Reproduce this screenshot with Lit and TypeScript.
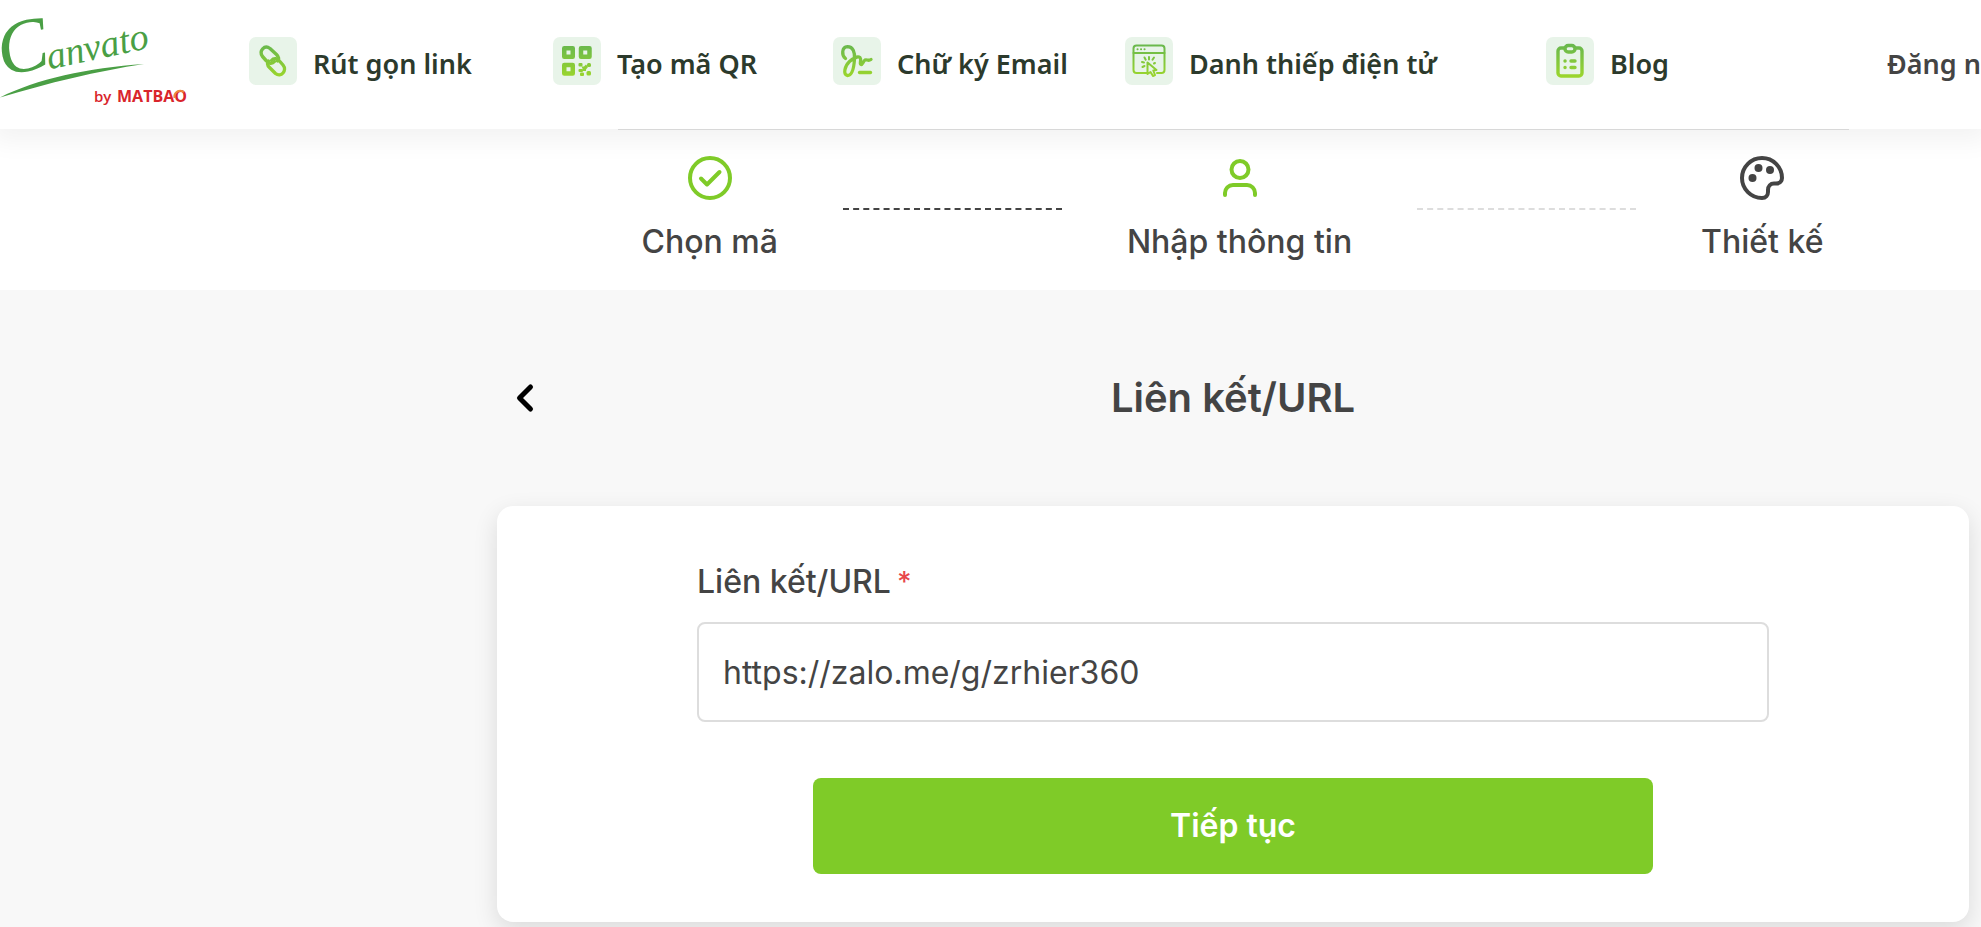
import { LitElement, html, css, svg } from "lit";
import { customElement, state } from "lit/decorators.js";

type NavItem = { label: string; icon: unknown };

const navIcon = (body: unknown) => svg`
  <svg viewBox="0 0 48 48" width="48" height="48" aria-hidden="true">
    <defs>
      <linearGradient id="g" gradientUnits="userSpaceOnUse" x1="0" y1="8" x2="0" y2="40">
        <stop offset="0" stop-color="#69b84d" />
        <stop offset="1" stop-color="#9bd62c" />
      </linearGradient>
    </defs>
    <rect width="48" height="48" rx="7" fill="#e8f4e9" />
    ${body}
  </svg>`;

const linkIcon = navIcon(svg`
  <g fill="none" stroke="url(#g)" stroke-width="3.400" stroke-linecap="round" stroke-linejoin="round">
    <path d="M25.500 24.500C23 27.500 19.500 26.500 17.500 24L13.500 19.500C9.500 14 15.500 7.500 21 11.500L27.500 17.500C29.500 19.500 30 22 28.500 24" />
    <path d="M22.500 23.500C25 20.500 28.500 21.500 30.500 24L34 28C38.500 33.500 32 41 26.500 36.500L20.500 30.500C18.500 28.500 18 26 19.500 24" />
  </g>`);

const qrIcon = navIcon(svg`
  <g fill="none" stroke="url(#g)" stroke-width="4.500" stroke-linejoin="round">
    <rect x="11.250" y="11.250" width="8.500" height="8.500" />
    <rect x="28" y="11.250" width="8.500" height="8.500" />
    <rect x="11.250" y="28" width="8.500" height="8.500" />
  </g>
  <g fill="url(#g)">
    <rect x="25.500" y="26" width="4" height="3.500" rx="1" />
    <rect x="34" y="26" width="4" height="4" rx="1.500" />
    <path d="M28.500 29.500H31L33 27.500L35 30L33 32.500V34H29.500V31.500Z" />
    <rect x="25.500" y="32" width="4.500" height="3" rx="1" />
    <rect x="27" y="35.500" width="4" height="3.500" rx="1" />
    <rect x="33.500" y="34" width="4.500" height="4.500" rx="1.500" />
  </g>`);

const signIcon = navIcon(svg`
  <g fill="none" stroke="url(#g)" stroke-width="3.300" stroke-linecap="round" stroke-linejoin="round">
    <path d="M12.500 21.500C8.500 18.500 8.500 10 14.500 9.700C20 9.700 22 15 21.500 22C21 30 19.500 38.500 14.500 38.500C9.500 38 12 28.500 16.500 24.500C20.500 21 25 19 27 20.500C29 23 26 27 28 27.500C29.500 28 30 24.500 32 23C34 22 35 24.500 38 22.500" />
    <path d="M26.500 35.500H37.500" />
  </g>`);

const cardIcon = navIcon(svg`
  <g fill="none" stroke="url(#g)" stroke-width="2" stroke-linecap="round" stroke-linejoin="round">
    <path d="M22 36H11.500A3 3 0 0 1 8.500 33V11.500A3 3 0 0 1 11.500 8.500H36.500A3 3 0 0 1 39.500 11.500V33A3 3 0 0 1 36.500 36H32" />
    <path d="M8.500 16H39.500M12.500 12.300h.1M16 12.300h.1M19.500 12.300h.1" />
    <path d="M24 20v2.500M19.500 20.500l1.200 2.200M29 20.500l-1.500 2.200M17 25l2 .5M17.500 30l2-1M29 26.500l1-.5" />
    <path d="M22.500 25.500V37L25.500 35L28 39L30 38L28.300 33.500L31.500 33Z" />
  </g>`);

const blogIcon = navIcon(svg`
  <g fill="none" stroke="url(#g)" stroke-width="3.400" stroke-linecap="round" stroke-linejoin="round">
    <path d="M18 11H15A3 3 0 0 0 12 14V36A3 3 0 0 0 15 39H33A3 3 0 0 0 36 36V14A3 3 0 0 0 33 11H30" />
    <rect x="19" y="8.500" width="10" height="6.500" rx="3.200" />
    <path d="M19 24h.1M25 24h4M19 30.500h.1M25 30.500h4" />
  </g>`);

const checkIcon = svg`
  <svg viewBox="0 0 44 44" width="44" height="44" fill="none" stroke="currentColor" stroke-width="4" stroke-linecap="round" stroke-linejoin="round" aria-hidden="true">
    <circle cx="22" cy="22" r="20" />
    <path d="M13 22.500L19 28.500L31.500 16" />
  </svg>`;

const userIcon = svg`
  <svg viewBox="0 0 44 44" width="44" height="44" fill="none" stroke="currentColor" stroke-width="4" stroke-linecap="round" stroke-linejoin="round" aria-hidden="true">
    <circle cx="22" cy="13.500" r="8.500" />
    <path d="M7 39V37A8 8 0 0 1 15 29H29A8 8 0 0 1 37 37V39" />
  </svg>`;

const paletteIcon = svg`
  <svg viewBox="0 0 44 44" width="44" height="44" aria-hidden="true">
    <path fill="none" stroke="currentColor" stroke-width="4" stroke-linejoin="round" d="M22 2C11 2 2 11 2 22S11 42 22 42C26 42 28 39 28 36V34C28 30 30.500 27.500 34 27.500H36C40 27.500 42 25 42 22C42 11 33 2 22 2Z" />
    <g fill="currentColor"><circle cx="12.500" cy="22" r="4" /><circle cx="18.500" cy="12" r="4" /><circle cx="30" cy="14" r="4" /></g>
  </svg>`;

@customElement("app-root")
export class AppRoot extends LitElement {
  @state() private url = "https://zalo.me/g/zrhier360";

  private nav: NavItem[] = [
    { label: "Rút gọn link", icon: linkIcon },
    { label: "Tạo mã QR", icon: qrIcon },
    { label: "Chữ ký Email", icon: signIcon },
    { label: "Danh thiếp điện tử", icon: cardIcon },
    { label: "Blog", icon: blogIcon },
  ];

  static styles = css`
    :host {
      display: block;
      min-height: 100vh;
      overflow: hidden;
      background: #f8f8f8;
      color: #444;
      font-family: Inter, "Noto Sans", sans-serif;
      font-size: 32px;
      line-height: 40px;
    }
    * { box-sizing: border-box; }
    svg { display: block; flex: none; overflow: visible; }
    .header {
      position: relative;
      display: grid;
      grid-template-columns: 249px 304fr 280fr 292fr 421fr 341fr 94fr;
      align-items: center;
      height: 129px;
      padding-bottom: 7px;
      background: #fff;
      box-shadow: 0 4px 24px 8px rgba(0, 0, 0, 0.05);
      font-family: "Noto Sans", sans-serif;
      font-size: 27px;
      font-weight: 600;
    }
    .header a {
      display: flex;
      align-items: center;
      gap: 16px;
      min-width: 0;
      color: #2c3a2c;
      text-decoration: none;
      white-space: nowrap;
    }
    .nav-label { padding-top: 6px; }
    .header .login { color: #444; overflow: hidden; }
    .header .logo { align-self: start; font-weight: 400; }
    .steps-band { background: #fff; padding-left: 485px; }
    .steps {
      position: relative;
      display: flex;
      align-items: center;
      gap: 65px;
      width: calc(100% - 265px);
      margin: 0 auto;
      padding: 26px 25px 28px 24px;
      border-top: 1px solid #d8d8d8;
      font-weight: 500;
    }
    .step { display: grid; justify-items: center; gap: 22px; white-space: nowrap; }
    .done { color: #7fcb28; }
    .step-label { color: #444; }
    .line { flex: 1; border-top: 2px dashed #444; }
    .line.pending { border-color: #ddd; }
    .content { padding: 84px 12px 5px 497px; }
    .title-row {
      display: grid;
      grid-template-columns: 56px 1fr 56px;
      align-items: center;
      margin-bottom: 84px;
    }
    .back { display: grid; place-items: center; height: 48px; padding: 0; border: 0; background: none; color: #000; }
    h1 { margin: 0; text-align: center; font-size: 40px; line-height: 48px; font-weight: 600; }
    .card {
      padding: 56px 200px 48px;
      border-radius: 16px;
      background: #fff;
      box-shadow: 0 8px 24px rgba(0, 0, 0, 0.12);
    }
    .field { display: flex; gap: 6px; font-weight: 500; margin-bottom: 20px; }
    .required { color: #e8474c; font-size: 28px; }
    input {
      display: block;
      width: 100%;
      height: 100px;
      padding: 0 24px;
      border: 2px solid #ddd;
      border-radius: 8px;
      background: #fff;
      color: #444;
      font: inherit;
      outline: none;
    }
    .submit {
      display: block;
      width: calc(100% - 232px);
      height: 96px;
      margin: 56px auto 0;
      border: 0;
      border-radius: 8px;
      background: #7fcb28;
      color: #fff;
      font: inherit;
      font-weight: 600;
    }
  `;

  render() {
    return html`
      <header class="header">
        <a class="logo" href="#" aria-label="Canvato by MATBAO">
          <svg viewBox="0 0 200 120" width="200" height="120">
            <g fill="#4a9f45" font-family="Liberation Serif" font-style="italic" transform="rotate(-12 4 78)">
              <text x="3" y="76" font-size="76">C</text>
              <text x="50" y="79" font-size="38">anvato</text>
            </g>
            <path fill="#4a9f45" d="M0 97.500C36 79 88 68 144 64C98 71 48 83 0 97.500Z" />
            <g fill="#d9252b" font-family="Open Sans">
              <text x="94" y="102" font-size="15" font-weight="600">by</text>
              <text x="117" y="102" font-size="16" font-weight="700">MATBAO</text>
            </g>
            <path d="M174.500 98A6 6 0 0 1 184 92" fill="none" stroke="#ee8a3c" stroke-width="2" />
          </svg>
        </a>
        ${this.nav.map((n) => html`<a href="#">${n.icon}<span class="nav-label">${n.label}</span></a>`)}
        <a class="login" href="#"><span class="nav-label">Đăng nhập</span></a>
      </header>
      <div class="steps-band">
        <div class="steps">
          <div class="step done">${checkIcon}<span class="step-label">Chọn mã</span></div>
          <div class="line"></div>
          <div class="step done">${userIcon}<span class="step-label">Nhập thông tin</span></div>
          <div class="line pending"></div>
          <div class="step">${paletteIcon}<span class="step-label">Thiết kế</span></div>
        </div>
      </div>
      <main class="content">
        <div class="title-row">
          <button class="back" type="button" aria-label="Quay lại">
            <svg viewBox="0 0 18 28" width="18" height="28" fill="none" stroke="#000" stroke-width="5" stroke-linecap="round" stroke-linejoin="round">
              <path d="M14.500 3L3.500 14L14.500 25" />
            </svg>
          </button>
          <h1>Liên kết/URL</h1>
        </div>
        <form class="card" @submit=${(e: Event) => e.preventDefault()}>
          <label class="field" for="url">Liên kết/URL<span class="required">*</span></label>
          <input id="url" type="text" .value=${this.url}
            @input=${(e: Event) => (this.url = (e.target as HTMLInputElement).value)} />
          <button class="submit" type="submit">Tiếp tục</button>
        </form>
      </main>
    `;
  }
}
